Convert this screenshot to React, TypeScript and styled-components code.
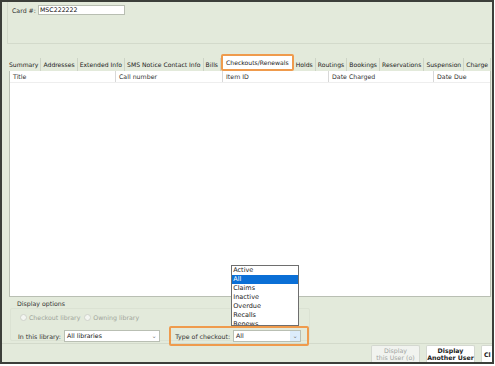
import styled, { createGlobalStyle } from 'styled-components';

const GlobalStyle = createGlobalStyle`
    html, body {
        margin: 0;
        padding: 0;
        background: #ffffff;
    }
    body {
        font-family: "DejaVu Sans", Verdana, sans-serif;
        font-size: 6.25px;
        color: #222222;
    }
`

const Frame = styled.div`
    position: relative;
    box-sizing: border-box;
    width: 494px;
    height: 364px;
    border: 2px solid #3c3f3a;
    background: #e3eadb;
    display: flex;
    flex-direction: column;
    overflow: hidden;
`

const TopPanel = styled.div`
    box-sizing: border-box;
    height: 42px;
    margin-left: 5px;
    border-left: 1px solid #d3dacb;
    border-bottom: 1px solid #d3dacb;
    padding: 3px 0 0 4px;
`

const FieldRow = styled.div`
    display: flex;
    align-items: center;
    gap: 2px;
`

const Label = styled.span`
    color: #333333;
    white-space: nowrap;
`

const TextInput = styled.div`
    box-sizing: border-box;
    width: 87px;
    height: 10px;
    background: #ffffff;
    border: 1px solid #b8beb2;
    padding: 0 1px;
    line-height: 8px;
    color: #111111;
`

const TabStrip = styled.div`
    display: flex;
    align-items: flex-end;
    margin-top: 10px;
    padding-left: 5px;
    height: 17px;
`

const Tab = styled.div<{ $active?: boolean }>`
    box-sizing: border-box;
    flex-shrink: 0;
    height: ${p => (p.$active ? '17px' : '13px')};
    padding: 0 ${p => (p.$active ? '3px' : '2px')};
    display: flex;
    align-items: center;
    white-space: nowrap;
    font-size: 6.1px;
    color: #222222;
    background: ${p => (p.$active ? '#ffffff' : 'transparent')};
    border: ${p => (p.$active ? '2px solid #ef9b4d' : 'none')};
    border-right: ${p => (p.$active ? '2px solid #ef9b4d' : '1px solid #cdd4c6')};
    border-radius: ${p => (p.$active ? '2px' : '0')};
`

const TablePanel = styled.div`
    box-sizing: border-box;
    height: 226px;
    flex-shrink: 0;
    margin: 0 1px 0 7px;
    background: #ffffff;
    border: 1px solid #b9bfb3;
    border-top: none;
`

const HeaderRow = styled.div`
    display: grid;
    grid-template-columns: 106px 107px 106px 105px 1fr;
    height: 11px;
    border-bottom: 1px solid #eeeeee;
`

const HeaderCell = styled.div`
    padding-left: 3px;
    line-height: 11px;
    border-right: 1px solid #d8d8d8;
    color: #333333;
    &:last-child {
        border-right: none;
    }
`

const Options = styled.div`
    flex: 1;
    display: flex;
    flex-direction: column;
    padding: 2px 0 0 8px;
`

const GroupTitle = styled.div`
    padding-left: 7px;
    line-height: 9px;
    color: #333333;
`

const GroupBox = styled.div`
    box-sizing: border-box;
    width: 300px;
    height: 33px;
    border: 1px solid #dbe2d3;
    border-radius: 2px;
    padding: 5px 0 0 9px;
    display: flex;
    flex-direction: column;
    gap: 5px;
`

const RadioRow = styled.div`
    display: flex;
    align-items: center;
    gap: 4px;
    color: #9ea49a;
`

const Radio = styled.label`
    display: flex;
    align-items: center;
    gap: 2px;
`

const RadioDot = styled.span`
    box-sizing: border-box;
    width: 7px;
    height: 7px;
    border-radius: 50%;
    border: 1px solid #cfd3cb;
    background: #f3f5f1;
`

const FilterRow = styled.div`
    display: flex;
    align-items: center;
    margin-left: -2px;
`

const Select = styled.div<{ $width: number }>`
    position: relative;
    box-sizing: border-box;
    width: ${p => p.$width}px;
    height: 12px;
    background: #ffffff;
    border: 1px solid #b9bfb3;
    padding-left: 2px;
    line-height: 10px;
    color: #111111;
    display: flex;
    justify-content: space-between;
`

const Chevron = styled.span<{ $focus?: boolean }>`
    width: 10px;
    display: flex;
    align-items: center;
    justify-content: center;
    background: ${p => (p.$focus ? '#dcecfb' : 'transparent')};
    color: #777777;
`

const Highlight = styled.div`
    position: relative;
    box-sizing: border-box;
    display: flex;
    align-items: center;
    gap: 3px;
    height: 20px;
    margin-left: 9px;
    padding: 0 6px 0 4px;
    border: 2px solid #ef9b4d;
    border-radius: 2px;
`

const DropList = styled.div`
    position: absolute;
    left: 60px;
    bottom: 18px;
    box-sizing: border-box;
    width: 68px;
    height: 61px;
    overflow: hidden;
    background: #ffffff;
    border: 1px solid #6e6e6e;
    z-index: 2;
`

const DropItem = styled.div<{ $selected?: boolean }>`
    height: 9px;
    line-height: 9px;
    padding-left: 1px;
    font-size: 6.5px;
    color: ${p => (p.$selected ? '#ffffff' : '#222222')};
    background: ${p => (p.$selected ? '#0a6fd6' : 'transparent')};
`

const Footer = styled.div`
    display: flex;
    justify-content: flex-end;
    gap: 6px;
    height: 17px;
    margin-top: auto;
    margin-left: -8px;
    border-top: 1px solid #d3dacb;
    padding-top: 1px;
    overflow: hidden;
`

const Button = styled.div<{ $disabled?: boolean }>`
    box-sizing: border-box;
    width: 49px;
    height: 17px;
    background: ${p => (p.$disabled ? '#f1f3ef' : '#ffffff')};
    border: 1px solid #d4d8d0;
    border-bottom: none;
    border-radius: 2px 2px 0 0;
    color: ${p => (p.$disabled ? '#a0a4a0' : '#222222')};
    font-weight: ${p => (p.$disabled ? 'normal' : 'bold')};
    text-align: center;
    line-height: 7px;
    padding-top: 1px;
    white-space: nowrap;
`

const CloseButton = styled(Button)`
    width: 14px;
    margin-right: -3px;
    text-align: left;
    line-height: 15px;
    padding-left: 2px;
`

const tabs = [
    'Summary', 'Addresses', 'Extended Info', 'SMS Notice Contact Info', 'Bills',
    'Checkouts/Renewals', 'Holds', 'Routings', 'Bookings', 'Reservations', 'Suspension', 'Charge',
]

const columns = ['Title', 'Call number', 'Item ID', 'Date Charged', 'Date Due']

const checkoutTypes = ['Active', 'All', 'Claims', 'Inactive', 'Overdue', 'Recalls', 'Renews']

export default function App() {
    return (
        <>
            <GlobalStyle />
            <Frame>
                <TopPanel>
                    <FieldRow>
                        <Label>Card #:</Label>
                        <TextInput>MSC222222</TextInput>
                    </FieldRow>
                </TopPanel>
                <TabStrip>
                    {tabs.map(t => (
                        <Tab key={t} $active={t === 'Checkouts/Renewals'}>{t}</Tab>
                    ))}
                </TabStrip>
                <TablePanel>
                    <HeaderRow>
                        {columns.map(c => <HeaderCell key={c}>{c}</HeaderCell>)}
                    </HeaderRow>
                </TablePanel>
                <Options>
                    <GroupTitle>Display options</GroupTitle>
                    <GroupBox>
                        <RadioRow>
                            <Radio><RadioDot />Checkout library</Radio>
                            <Radio><RadioDot />Owning library</Radio>
                        </RadioRow>
                        <FilterRow>
                            <Label>In this library:</Label>
                            <Select $width={97} style={{ marginLeft: 3 }}>
                                All libraries<Chevron>⌄</Chevron>
                            </Select>
                            <Highlight>
                                <Label>Type of checkout:</Label>
                                <Select $width={68}>
                                    All<Chevron $focus>⌄</Chevron>
                                </Select>
                                <DropList>
                                    {checkoutTypes.map(o => (
                                        <DropItem key={o} $selected={o === 'All'}>{o}</DropItem>
                                    ))}
                                </DropList>
                            </Highlight>
                        </FilterRow>
                    </GroupBox>
                    <Footer>
                        <Button $disabled>Display<br />this User (o)</Button>
                        <Button>Display<br />Another User</Button>
                        <CloseButton>Cl</CloseButton>
                    </Footer>
                </Options>
            </Frame>
        </>
    )
}
